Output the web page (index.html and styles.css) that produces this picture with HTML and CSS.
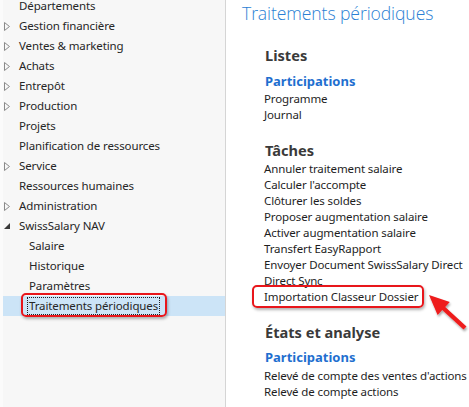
FILE: index.html
```html
<!DOCTYPE html>
<html lang="fr">
<head>
<meta charset="utf-8">
<link rel="stylesheet" href="styles.css">
</head>
<body>
<div class="page">
  <nav class="nav">
    <div class="row"><span class="tw"></span><span class="label">Départements</span></div>
    <div class="row"><span class="tw"><svg width="6" height="9" viewBox="0 0 6 9"><path d="M0.5 0.5 L5.5 4.5 L0.5 8.5 Z" fill="none" stroke="#8a8a8a" stroke-width="1"/></svg></span><span class="label">Gestion financière</span></div>
    <div class="row"><span class="tw"><svg width="6" height="9" viewBox="0 0 6 9"><path d="M0.5 0.5 L5.5 4.5 L0.5 8.5 Z" fill="none" stroke="#8a8a8a" stroke-width="1"/></svg></span><span class="label">Ventes &amp; marketing</span></div>
    <div class="row"><span class="tw"><svg width="6" height="9" viewBox="0 0 6 9"><path d="M0.5 0.5 L5.5 4.5 L0.5 8.5 Z" fill="none" stroke="#8a8a8a" stroke-width="1"/></svg></span><span class="label">Achats</span></div>
    <div class="row"><span class="tw"><svg width="6" height="9" viewBox="0 0 6 9"><path d="M0.5 0.5 L5.5 4.5 L0.5 8.5 Z" fill="none" stroke="#8a8a8a" stroke-width="1"/></svg></span><span class="label">Entrepôt</span></div>
    <div class="row"><span class="tw"><svg width="6" height="9" viewBox="0 0 6 9"><path d="M0.5 0.5 L5.5 4.5 L0.5 8.5 Z" fill="none" stroke="#8a8a8a" stroke-width="1"/></svg></span><span class="label">Production</span></div>
    <div class="row"><span class="tw"></span><span class="label">Projets</span></div>
    <div class="row"><span class="tw"></span><span class="label">Planification de ressources</span></div>
    <div class="row"><span class="tw"><svg width="6" height="9" viewBox="0 0 6 9"><path d="M0.5 0.5 L5.5 4.5 L0.5 8.5 Z" fill="none" stroke="#8a8a8a" stroke-width="1"/></svg></span><span class="label">Service</span></div>
    <div class="row"><span class="tw"></span><span class="label">Ressources humaines</span></div>
    <div class="row"><span class="tw"><svg width="6" height="9" viewBox="0 0 6 9"><path d="M0.5 0.5 L5.5 4.5 L0.5 8.5 Z" fill="none" stroke="#8a8a8a" stroke-width="1"/></svg></span><span class="label">Administration</span></div>
    <div class="row"><span class="tw"><svg width="6" height="6" viewBox="0 0 6 6"><path d="M6 0 L6 6 L0 6 Z" fill="#3a3a3a"/></svg></span><span class="label">SwissSalary NAV</span></div>
    <div class="row sub"><span class="tw"></span><span class="label">Salaire</span></div>
    <div class="row sub"><span class="tw"></span><span class="label">Historique</span></div>
    <div class="row sub"><span class="tw"></span><span class="label">Paramètres</span></div>
    <div class="row sub selected"><span class="tw"></span><span class="label focus">Traitements périodiques</span><span class="callout nav-callout"></span></div>
  </nav>
  <main class="content">
    <h1 class="title">Traitements périodiques</h1>
    <section class="group">
      <h2 class="group-title first">Listes</h2>
      <h3 class="sub-title">Participations</h3>
      <ul class="links">
        <li>Programme</li>
        <li>Journal</li>
      </ul>
    </section>
    <section class="group">
      <h2 class="group-title">Tâches</h2>
      <ul class="links">
        <li>Annuler traitement salaire</li>
        <li>Calculer l'accompte</li>
        <li>Clôturer les soldes</li>
        <li>Proposer augmentation salaire</li>
        <li>Activer augmentation salaire</li>
        <li>Transfert EasyRapport</li>
        <li>Envoyer Document SwissSalary Direct</li>
        <li>Direct Sync</li>
        <li class="marked">Importation Classeur Dossier<span class="callout task-callout"></span></li>
      </ul>
    </section>
    <section class="group">
      <h2 class="group-title">États et analyse</h2>
      <h3 class="sub-title">Participations</h3>
      <ul class="links">
        <li>Relevé de compte des ventes d'actions</li>
        <li>Relevé de compte actions</li>
      </ul>
    </section>
  </main>
  <svg class="arrow" width="46" height="44" viewBox="0 0 46 44">
    <defs>
      <filter id="sh" x="-30%" y="-30%" width="170%" height="170%">
        <feDropShadow dx="1" dy="2" stdDeviation="1.2" flood-color="#000" flood-opacity="0.35"/>
      </filter>
    </defs>
    <g filter="url(#sh)">
      <path d="M4 5 L24.8 11.9 L20.2 16.9 L41.5 36.4 L38.5 39.6 L17.2 20.1 L12.6 25.1 Z" fill="#ee1c1c"/>
    </g>
  </svg>
</div>
</body>
</html>
```
FILE: styles.css
```css
* { box-sizing: border-box; }
html, body { margin: 0; padding: 0; }
body {
  width: 469px;
  height: 407px;
  overflow: hidden;
  background: #ffffff;
  font-family: "Noto Sans", "Open Sans", sans-serif;
  font-size: 11.5px;
  letter-spacing: -0.12px;
  color: #1e1e1e;
}
.page {
  position: relative;
  display: flex;
  width: 469px;
  height: 407px;
}
.nav {
  width: 226px;
  flex: none;
  background: #f7f7f7;
  border-right: 1px solid #d5d5d5;
  border-left: 3px solid #fbfbfb;
}
.row {
  position: relative;
  display: flex;
  align-items: center;
  height: 20px;
  white-space: nowrap;
  color: #262626;
}
.row:first-child { margin-top: -4px; }
.tw {
  width: 16px;
  flex: none;
  display: flex;
  align-items: center;
  padding-left: 1px;
}
.tw svg { display: block; }
.row.sub .label { margin-left: 10px; }
.row.selected { background: #cce4f7; }
.label { line-height: 16px; }
.focus {
  outline: 1px dotted #202020;
  outline-offset: 0;
  padding: 0 1px;
  margin-left: 9px !important;
}
.callout {
  position: absolute;
  border: 2px solid #e8161b;
  border-radius: 5px;
  box-shadow: 1px 2px 3px rgba(0,0,0,0.3);
  pointer-events: none;
}
.nav-callout {
  left: 18px;
  top: -3px;
  width: 146px;
  height: 24px;
}
.content {
  flex: 1;
  padding-left: 16px;
}
.title {
  margin: 0;
  font-family: "Open Sans", "Noto Sans", sans-serif;
  font-weight: 300;
  font-size: 17.6px;
  letter-spacing: -0.1px;
  color: #2b7fd4;
  line-height: 24px;
  padding-top: 1px;
  height: 25px;
  white-space: nowrap;
}
.group {
  padding-left: 23px;
}
.group-title {
  margin: 17.8px 0 0;
  font-size: 14.6px;
  letter-spacing: 0;
  font-weight: 700;
  color: #3a3a3a;
  line-height: 18px;
}
.group-title.first { margin-top: 21.3px; }
.sub-title {
  margin: 7.7px 0 0;
  font-size: 13px;
  letter-spacing: 0;
  font-weight: 700;
  color: #1f6fcf;
  line-height: 18px;
}
.links {
  list-style: none;
  margin: 1.5px 0 0 -1px;
  padding: 0;
}
.links li {
  position: relative;
  line-height: 16px;
  height: 16px;
  white-space: nowrap;
  color: #1e1e1e;
}
.task-callout {
  left: -12px;
  top: -4px;
  width: 172px;
  height: 23px;
}
.arrow {
  position: absolute;
  left: 425px;
  top: 290px;
}
```
